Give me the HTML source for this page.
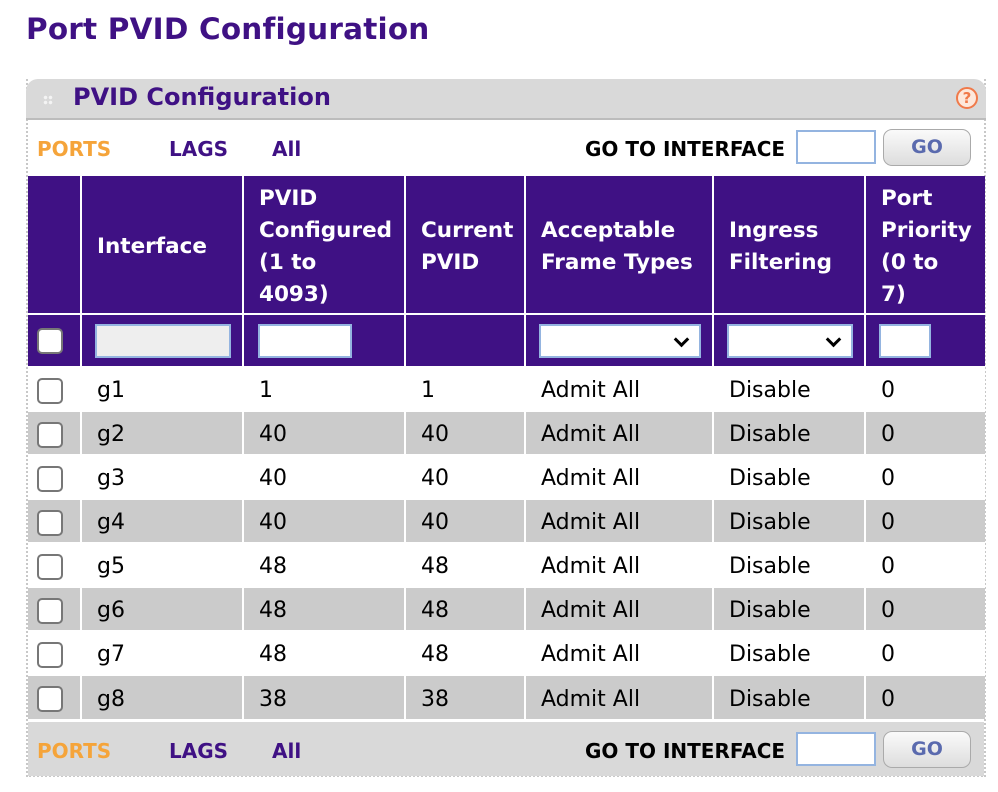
<!DOCTYPE html>
<html><head><style>
*{margin:0;padding:0;box-sizing:border-box}
body{width:998px;height:792px;background:#fff;font-family:"DejaVu Sans",Verdana,sans-serif;position:relative;overflow:hidden}
h1{position:absolute;left:26px;top:12px;font-size:29.5px;font-weight:bold;color:#3f1184;letter-spacing:0.2px}
.panel{position:absolute;left:26px;top:79px;width:960px;height:698px;border-left:2px dotted #c8c8c8;border-right:2px dotted #c8c8c8;border-bottom:2px dotted #c8c8c8}
.hdr{position:absolute;left:26px;top:79px;width:960px;height:41px;background:#d9d9d9;border-radius:12px 12px 0 0;border-bottom:2px solid #bcbcbc}
.hdr .t{position:absolute;left:47px;top:4px;font-size:24px;font-weight:bold;color:#3f1184}
.dots{position:absolute;left:17px;top:16px;width:10px;height:10px;background:radial-gradient(circle,#f4f4f4 1.5px,transparent 2px) 0 0/5px 5px}
.help{position:absolute;right:8px;top:8px;width:22px;height:22px;border:2px solid #f07a4a;border-radius:50%;color:#f07a4a;font-size:15px;font-weight:bold;text-align:center;line-height:18px;background:#fde8dc}
.nav{position:absolute;left:28px;width:956px;height:56px}
.nav span{position:absolute;top:17px;font-size:20px;font-weight:bold}
.o{color:#f5a43a}.p{color:#3f1184}.k{color:#000}
.inp{position:absolute;left:768px;top:10px;width:80px;height:34px;border:2px solid #94b4e0;background:#fff}
.go{position:absolute;left:855px;top:9px;width:88px;height:37px;border:1px solid #aaa;border-radius:9px;background:linear-gradient(#fafafa,#ddd);color:#5a6aae;font-size:19px;font-weight:bold;text-align:center;line-height:35px}
table{position:absolute;left:28px;top:176px;border-collapse:collapse;table-layout:fixed;width:957px}
td,th{border-left:2px solid #fff;border-top:2px solid #fff;text-align:left;vertical-align:middle;padding-left:15px}
td:first-child,th:first-child{border-left:none;padding-left:9px}
tr:first-child th{border-top:none}
th{background:#3f1184;color:#fff;font-size:21.5px;line-height:32px;height:138px;font-weight:bold;white-space:nowrap;padding-top:4px}
tr.f td{background:#3f1184;height:53px}
tr.d td{height:44px;font-size:22px;color:#000;padding-top:3px}
tr.d:nth-child(even) td{background:#cbcbcb}
tr.d:nth-child(odd) td{background:#fff}
.cb{width:26px;height:26px;border:2px solid #777;border-radius:5px;background:#fff}
.fi{height:34px;border:2px solid #94b4e0;background:#fff}
.sel{position:relative}
.sel:after{content:"";position:absolute;right:12px;top:8px;width:8px;height:8px;border-right:3px solid #000;border-bottom:3px solid #000;transform:rotate(45deg)}
</style></head><body>
<h1>Port PVID Configuration</h1>
<div class="panel"></div>
<div class="hdr"><div class="dots"></div><div class="t">PVID Configuration</div><div class="help">?</div></div>
<div class="nav" style="top:120px;background:#fff"><span class="o" style="left:9px">PORTS</span><span class="p" style="left:141px">LAGS</span><span class="p" style="left:244px">All</span><span class="k" style="left:557px">GO TO INTERFACE</span><div class="inp"></div><div class="go">GO</div></div>
<table>
<colgroup><col style="width:53px"><col style="width:162px"><col style="width:162px"><col style="width:120px"><col style="width:188px"><col style="width:152px"><col style="width:120px"></colgroup>
<tr><th></th><th>Interface</th><th>PVID<br>Configured<br>(1 to<br>4093)</th><th>Current<br>PVID</th><th>Acceptable<br>Frame Types</th><th>Ingress<br>Filtering</th><th>Port<br>Priority<br>(0 to<br>7)</th></tr>
<tr class="f"><td><div class="cb"></div></td><td style="padding-left:13px"><div class="fi" style="width:136px;background:#eee"></div></td><td style="padding-left:14px"><div class="fi" style="width:94px"></div></td><td></td><td style="padding-left:13px"><div class="fi sel" style="width:162px"></div></td><td style="padding-left:13px"><div class="fi sel" style="width:126px"></div></td><td style="padding-left:13px"><div class="fi" style="width:52px"></div></td></tr>
<tr class="d"><td><div class="cb"></div></td><td>g1</td><td>1</td><td>1</td><td>Admit All</td><td>Disable</td><td>0</td></tr>
<tr class="d"><td><div class="cb"></div></td><td>g2</td><td>40</td><td>40</td><td>Admit All</td><td>Disable</td><td>0</td></tr>
<tr class="d"><td><div class="cb"></div></td><td>g3</td><td>40</td><td>40</td><td>Admit All</td><td>Disable</td><td>0</td></tr>
<tr class="d"><td><div class="cb"></div></td><td>g4</td><td>40</td><td>40</td><td>Admit All</td><td>Disable</td><td>0</td></tr>
<tr class="d"><td><div class="cb"></div></td><td>g5</td><td>48</td><td>48</td><td>Admit All</td><td>Disable</td><td>0</td></tr>
<tr class="d"><td><div class="cb"></div></td><td>g6</td><td>48</td><td>48</td><td>Admit All</td><td>Disable</td><td>0</td></tr>
<tr class="d"><td><div class="cb"></div></td><td>g7</td><td>48</td><td>48</td><td>Admit All</td><td>Disable</td><td>0</td></tr>
<tr class="d"><td><div class="cb"></div></td><td>g8</td><td>38</td><td>38</td><td>Admit All</td><td>Disable</td><td>0</td></tr>
</table>
<div class="nav" style="top:720px;background:#d9d9d9;border-top:2px solid #fff"><span class="o" style="left:9px">PORTS</span><span class="p" style="left:141px">LAGS</span><span class="p" style="left:244px">All</span><span class="k" style="left:557px">GO TO INTERFACE</span><div class="inp"></div><div class="go">GO</div></div>
</body></html>
